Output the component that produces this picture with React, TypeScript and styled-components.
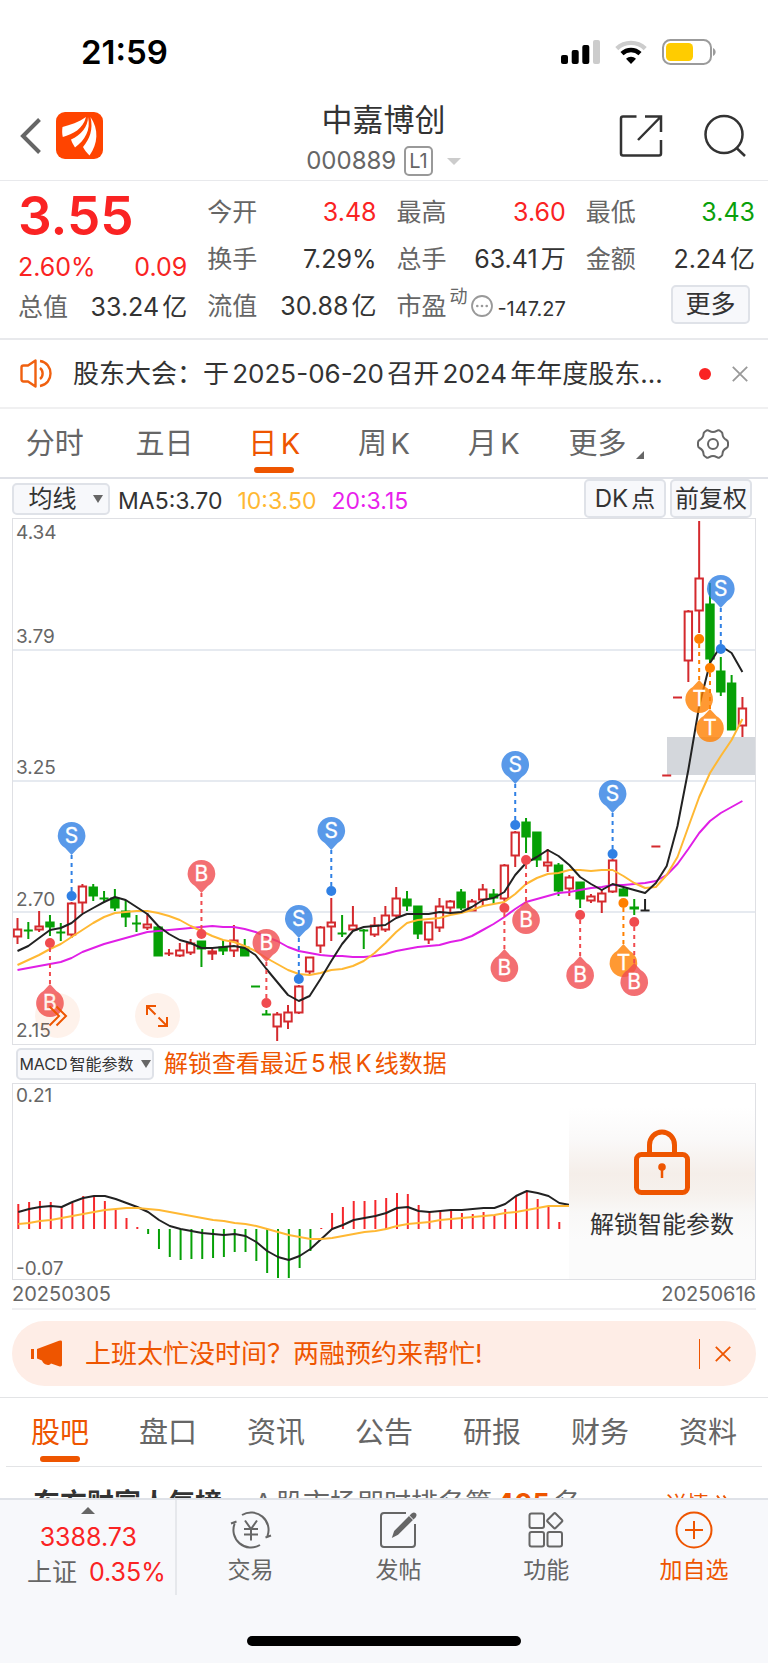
import React from "react";
import styled, { createGlobalStyle } from "styled-components";

const color = {
  text: "#333",
  sub: "#666",
  mute: "#999",
  up: "#fa2323",
  down: "#0aa00a",
  brand: "#ee5500",
  line: "#e8e9ec",
  chip: "#f7f8fb",
  chipLine: "#dfe2e8",
};

const GlobalStyle = createGlobalStyle`
  * { box-sizing: border-box; }
  html, body { margin: 0; background: #fff; }
  body, button {
    font-family: Inter, "Noto Sans CJK SC", sans-serif;
    color: ${color.text};
    text-autospace: normal;
  }
  button { margin: 0; padding: 0; border: 0; background: none; cursor: pointer; }
  svg { display: block; flex: none; }
`;

const Page = styled.div`
  display: flex;
  flex-direction: column;
  height: 100vh;
  overflow: hidden;
  background: #fff;
`;

const Main = styled.main`
  flex: 1;
  min-height: 0;
  overflow: hidden;
`;

/* ---------- status bar and header ---------- */

const StatusBar = styled.div`
  display: flex;
  align-items: center;
  justify-content: space-between;
  height: 88px;
  padding: 15px 52px 0 81px;
  font-size: 33px;
  line-height: 40px;
  font-weight: 600;
  color: #000;
`;

const StatusIcons = styled.div`
  display: flex;
  align-items: center;
  gap: 15px;
`;

const Header = styled.header`
  display: grid;
  grid-template-columns: 1fr auto 1fr;
  align-items: center;
  height: 93px;
  padding: 2px 21px 0 20px;
  border-bottom: 1px solid ${color.line};
`;

const HeaderSide = styled.div<{ $end?: boolean }>`
  display: flex;
  align-items: center;
  justify-content: ${(p) => (p.$end ? "flex-end" : "flex-start")};
  gap: ${(p) => (p.$end ? 41 : 14)}px;
`;

const TitleBlock = styled.div`
  display: flex;
  flex-direction: column;
  align-items: center;
  padding-top: 9px;
`;

const Title = styled.h1`
  margin: 0;
  font-size: 31px;
  line-height: 42px;
  font-weight: 400;
`;

const CodeRow = styled.button`
  display: flex;
  align-items: center;
  gap: 8px;
  height: 40px;
  font-size: 24px;
  line-height: 32px;
  color: ${color.sub};
`;

const LevelTag = styled.span`
  padding: 0 3px;
  border: 2px solid ${color.mute};
  border-radius: 5px;
  font-size: 20px;
  line-height: 26px;
`;

const CodeCaret = styled.span`
  margin-left: 6px;
  border: 7px solid transparent;
  border-top-color: #ccc;
  border-bottom: 0;
`;

/* ---------- quote ---------- */

const Quote = styled.section`
  display: grid;
  grid-template-columns: repeat(4, 1fr);
  column-gap: 20px;
  height: 159px;
  padding: 7px 13px 0 18px;
  border-bottom: 2px solid ${color.line};
`;

const QuoteColumn = styled.div`
  min-width: 0;
`;

const Price = styled.div`
  height: 55px;
  font-size: 53px;
  line-height: 56px;
  font-weight: 600;
  color: ${color.up};
`;

const Change = styled.div`
  display: flex;
  justify-content: space-between;
  height: 40px;
  padding-top: 4px;
  font-size: 25px;
  line-height: 40px;
  color: ${color.up};
`;

const QuoteItem = styled.div`
  display: flex;
  align-items: center;
  justify-content: space-between;
  height: 47px;
  font-size: 25px;
  line-height: 36px;
  white-space: nowrap;
`;

const Label = styled.span`
  color: ${color.sub};
`;

const Value = styled.span<{ $tone?: "up" | "down" }>`
  color: ${(p) => (p.$tone ? color[p.$tone] : color.text)};
`;

const RatioLabel = styled(Label)`
  display: flex;
  align-items: center;
  gap: 3px;
`;

const Super = styled.sup`
  align-self: flex-start;
  font-size: 18px;
  line-height: 18px;
`;

const SmallValue = styled.span`
  padding-top: 6px;
  font-size: 20px;
`;

const ChipButton = styled.button<{ $size?: number }>`
  display: flex;
  align-items: center;
  justify-content: center;
  gap: 8px;
  border: 2px solid ${color.chipLine};
  border-radius: 5px;
  background: ${color.chip};
  font-size: ${(p) => p.$size ?? 24}px;
  line-height: 1;
  white-space: nowrap;
`;

const MoreButton = styled(ChipButton)`
  width: 79px;
  height: 39px;
  margin: 3px 5px 0 auto;
`;

/* ---------- notice ---------- */

const Notice = styled.section`
  display: flex;
  align-items: center;
  height: 69px;
  padding: 0 20px;
  border-bottom: 2px solid #f0f0f1;
  font-size: 26px;
  line-height: 40px;
`;

const NoticeText = styled.a`
  flex: 1;
  min-width: 0;
  margin: 0 16px 0 20px;
  overflow: hidden;
  color: ${color.text};
  text-decoration: none;
  text-overflow: ellipsis;
  white-space: nowrap;
`;

const UnreadDot = styled.span`
  width: 12px;
  height: 12px;
  margin-right: 21px;
  border-radius: 50%;
  background: ${color.up};
`;

/* ---------- tabs ---------- */

const Tabs = styled.nav<{ $inset?: boolean }>`
  display: flex;
  height: ${(p) => (p.$inset ? 69 : 70)}px;
  margin: 0 ${(p) => (p.$inset ? 6 : 0)}px;
  border-bottom: ${(p) => (p.$inset ? "1px solid #e3e4e6" : "2px solid #dfe1e7")};
`;

const Tab = styled.button<{ $active?: boolean }>`
  position: relative;
  display: flex;
  flex: 1;
  align-items: center;
  justify-content: center;
  padding-top: 2px;
  font-size: 29px;
  line-height: 40px;
  color: ${(p) => (p.$active ? color.brand : color.sub)};
  &::after {
    content: "";
    position: absolute;
    left: 50%;
    bottom: 4px;
    width: 40px;
    height: 6px;
    margin-left: -20px;
    border-radius: 3px;
    background: ${(p) => (p.$active ? color.brand : "transparent")};
  }
`;

const Corner = styled.span`
  align-self: flex-end;
  margin: 0 -6px 18px 10px;
  border: 4px solid transparent;
  border-right-color: ${color.sub};
  border-bottom-color: ${color.sub};
`;

/* ---------- charts ---------- */

const ChartSection = styled.section`
  margin: 0 12px;
  border-bottom: 2px solid #efeff1;
`;

const Toolbar = styled.div`
  display: flex;
  align-items: center;
  height: 39px;
`;

const AverageButton = styled(ChipButton)`
  width: 98px;
  height: 32px;
  margin-right: 8px;
  padding-left: 9px;
  gap: 16px;
`;

const Caret = styled.span`
  border: 5px solid transparent;
  border-top: 8px solid ${color.sub};
  border-bottom: 0;
`;

const Legend = styled.span<{ $color: string }>`
  margin-right: 15px;
  padding-top: 5px;
  font-size: 23px;
  line-height: 30px;
  color: ${(p) => p.$color};
`;

const ToolGroup = styled.div`
  display: flex;
  gap: 4px;
  height: 39px;
  margin: 0 4px 0 auto;
`;

const ToolButton = styled(ChipButton)`
  width: 82px;
`;

const KBox = styled.div`
  position: relative;
  border: 1px solid #dfe0e4;
`;

const RoundButton = styled.button<{ $left: string }>`
  position: absolute;
  left: ${(p) => p.$left};
  bottom: 6px;
  display: flex;
  align-items: center;
  justify-content: center;
  width: 45px;
  height: 45px;
  border-radius: 50%;
  background: rgba(238, 85, 0, 0.08);
`;

const MacdBar = styled.div`
  display: flex;
  align-items: center;
  gap: 10px;
  height: 38px;
  padding-left: 4px;
`;

const MacdButton = styled(ChipButton)`
  width: 138px;
  height: 32px;
  gap: 7px;
`;

const UnlockLink = styled.a`
  font-size: 24px;
  line-height: 36px;
  color: ${color.brand};
  text-decoration: none;
`;

const MacdBox = styled.div`
  display: grid;
  grid-template-columns: 556fr 186fr;
  border: 1px solid #dfe0e4;
`;

const UnlockPanel = styled.button`
  display: flex;
  flex-direction: column;
  align-items: center;
  justify-content: center;
  gap: 12px;
  padding-top: 8px;
  font-size: 24px;
  line-height: 36px;
  background: linear-gradient(#fff 12%, #faf9f9 28%, #f5eee9 46%, #f6f1ed 56%, #f9f8f7 66%, #fbfbfb 80%);
`;

const Dates = styled.div`
  display: flex;
  justify-content: space-between;
  height: 28px;
  font-size: 20px;
  line-height: 28px;
  color: ${color.sub};
`;

/* ---------- promo, feed ---------- */

const Promo = styled.aside`
  display: flex;
  align-items: center;
  height: 65px;
  margin: 11px 12px;
  padding: 0 25px 0 19px;
  border-radius: 33px;
  background: #feede6;
  color: ${color.brand};
`;

const PromoText = styled.a`
  flex: 1;
  margin-left: 22px;
  font-size: 26px;
  line-height: 40px;
  color: ${color.brand};
  text-decoration: none;
`;

const PromoClose = styled.button`
  display: flex;
  align-items: center;
  height: 30px;
  padding-left: 15px;
  border-left: 1px solid ${color.brand};
`;

const Rule = styled.hr`
  height: 1px;
  margin: 0;
  border: 0;
  background: #e3e4e6;
`;

const Rank = styled.div`
  display: flex;
  align-items: center;
  padding: 17px 37px 17px 33px;
  font-size: 27px;
  line-height: 40px;
  color: ${color.sub};
`;

const RankTitle = styled.strong`
  margin-right: 32px;
  color: ${color.text};
`;

const RankValue = styled.strong`
  margin: 0 4px;
  color: ${color.brand};
`;

const RankLink = styled.a`
  display: flex;
  align-items: center;
  gap: 7px;
  margin-left: auto;
  font-size: 22px;
  color: ${color.brand};
  text-decoration: none;
`;

/* ---------- bottom bar ---------- */

const Footer = styled.footer`
  border-top: 2px solid ${color.chipLine};
  background: ${color.chip};
`;

const FooterRow = styled.div`
  display: flex;
  height: 95px;
`;

const IndexBox = styled.button`
  display: flex;
  flex: 0 0 23%;
  flex-direction: column;
  align-items: center;
  padding: 7px 0 0 2px;
  border-right: 2px solid #e6e8ec;
  font-size: 25px;
  line-height: 35px;
  color: ${color.sub};
  em { font-style: normal; color: ${color.up}; }
`;

const IndexCaret = styled.span`
  margin-bottom: 6px;
  border: 7px solid transparent;
  border-bottom-color: ${color.sub};
  border-top: 0;
`;

const IndexLine = styled.span`
  display: flex;
  gap: 12px;
  padding-left: 16px;
`;

const Action = styled.button<{ $active?: boolean }>`
  display: flex;
  flex: 1;
  flex-direction: column;
  align-items: center;
  gap: 4px;
  padding-top: 11px;
  font-size: 23px;
  line-height: 34px;
  color: ${(p) => (p.$active ? color.brand : color.sub)};
`;

const HomeIndicator = styled.div`
  width: 274px;
  height: 10px;
  margin: 41px auto 17px;
  border-radius: 5px;
  background: #000;
`;

/* ---------- chart data ---------- */

// [tone, high, body top, body bottom, low]
type Candle = ["r" | "g" | "k", number, number, number, number];

const candles: Candle[] = [
  ["r", 918, 929, 937, 944], ["g", 922, 930, 931, 939], ["r", 911, 926, 930, 932], ["g", 915, 922, 927, 936],
  ["g", 923, 932, 933, 941], ["r", 902, 903, 935, 938], ["r", 884, 886, 903, 913], ["g", 884, 887, 896, 901],
  ["g", 891, 898, 899, 903], ["g", 889, 898, 908, 911], ["g", 900, 911, 917, 927], ["g", 915, 923, 924, 932],
  ["r", 913, 924, 928, 930], ["g", 926, 927, 956, 956], ["r", 949, 953, 954, 956], ["r", 943, 950, 956, 957],
  ["r", 939, 943, 953, 955], ["g", 941, 941, 949, 967], ["r", 949, 951, 954, 960], ["g", 940, 947, 951, 955],
  ["r", 925, 940, 951, 957], ["g", 939, 947, 956, 956], ["g", 986, 986, 987, 987], ["g", 1010, 1014, 1015, 1015],
  ["r", 1012, 1014, 1027, 1041], ["r", 1005, 1012, 1022, 1029], ["r", 985, 986, 1013, 1014], ["r", 957, 957, 972, 974],
  ["r", 926, 927, 946, 953], ["r", 898, 922, 927, 941], ["g", 915, 933, 934, 937], ["r", 906, 925, 930, 931],
  ["g", 929, 930, 931, 949], ["r", 917, 925, 935, 937], ["r", 906, 915, 930, 932], ["r", 887, 898, 916, 917],
  ["g", 891, 899, 906, 911], ["g", 906, 906, 934, 939], ["r", 922, 922, 940, 944], ["r", 898, 906, 928, 932],
  ["r", 900, 901, 908, 913], ["g", 889, 892, 908, 910], ["r", 899, 901, 911, 911], ["r", 884, 889, 900, 906],
  ["g", 889, 894, 898, 904], ["r", 864, 865, 899, 901], ["r", 831, 832, 856, 867], ["g", 818, 822, 837, 853],
  ["g", 832, 832, 860, 867], ["r", 849, 862, 866, 872], ["g", 863, 865, 891, 896], ["r", 875, 877, 889, 896],
  ["g", 882, 882, 899, 908], ["r", 894, 896, 901, 903], ["r", 889, 893, 902, 913], ["r", 859, 860, 892, 893],
  ["g", 888, 889, 896, 896], ["g", 899, 907, 909, 915], ["k", 899, 910, 911, 911], ["r", 846, 846, 847, 847],
  ["r", 775, 775, 776, 776], ["r", 697, 697, 698, 698], ["r", 610, 611, 661, 682], ["r", 521, 578, 611, 633],
  ["g", 583, 604, 659, 663], ["g", 657, 671, 692, 696], ["g", 675, 683, 730, 730], ["r", 697, 708, 726, 737],
];

const ma5 = [
  951, 946, 938, 930, 928, 923, 914, 908, 902, 897, 900, 907, 914, 926, 934, 940, 943, 948, 948, 947, 946, 948, 955, 969,
  982, 995, 1001, 996, 979, 961, 944, 931, 927, 926, 925, 918, 914, 914, 914, 912, 913, 912, 907, 900, 898, 892, 875, 863,
  857, 850, 856, 865, 877, 884, 890, 884, 887, 890, 893, 883, 866, 826, 770, 706, 663, 646, 653, 672,
];

const ma10 = [
  965, 960, 955, 949, 944, 937, 930, 923, 917, 913, 912, 911, 911, 913, 916, 920, 926, 931, 936, 940, 942, 946, 951, 958,
  964, 970, 974, 975, 973, 970, 969, 966, 961, 953, 943, 932, 923, 920, 919, 918, 915, 913, 910, 906, 904, 902, 894, 884,
  878, 874, 873, 870, 870, 871, 870, 870, 876, 883, 888, 887, 875, 857, 827, 797, 773, 756, 740, 719,
];

const ma20 = [
  970, 968, 966, 964, 962, 958, 952, 948, 944, 941, 938, 935, 932, 931, 930, 929, 928, 927, 926, 927, 927, 929, 932, 937,
  941, 947, 951, 953, 955, 956, 956, 957, 957, 956, 954, 951, 949, 947, 946, 945, 942, 940, 936, 930, 924, 917, 909, 902,
  899, 896, 893, 892, 890, 888, 887, 885, 885, 884, 883, 881, 875, 864, 849, 833, 821, 813, 807, 801,
];

type PinKind = "S" | "B" | "T";
// [candle index, letter, dot y, above the dot]
const pins: [number, PinKind, number, boolean][] = [
  [3, "B", 943, false], [5, "S", 896, true], [17, "B", 934, true], [23, "B", 1003, true], [26, "S", 979, true],
  [29, "S", 891, true], [45, "B", 908, false], [46, "S", 825, true], [47, "B", 860, false], [52, "B", 915, false],
  [55, "S", 854, true], [56, "T", 903, false], [57, "B", 922, false], [63, "T", 639, false], [64, "T", 668, false],
  [65, "S", 649, true],
];

const pinColors: Record<PinKind, string> = {
  S: "#3080e4",
  B: "#f04b4f",
  T: "#ff8000",
};

const macdBars = [
  1204, 1202, 1201, 1202, 1207, 1203, 1196, 1197, 1201, 1210, 1218, 1227, 1234, 1249, 1257, 1260, 1259, 1259, 1258, 1257,
  1252, 1252, 1261, 1273, 1278, 1278, 1268, 1251, 1228, 1213, 1207, 1201, 1201, 1200, 1198, 1193, 1194, 1205, 1211, 1211,
  1209, 1213, 1214, 1212, 1215, 1209, 1196, 1192, 1199, 1207, 1222,
];

const dif = [
  1212, 1209, 1207, 1206, 1207, 1202, 1198, 1196, 1196, 1199, 1203, 1207, 1212, 1220, 1226, 1229, 1231, 1233, 1234, 1235,
  1234, 1236, 1242, 1251, 1257, 1260, 1256, 1249, 1239, 1229, 1225, 1220, 1218, 1216, 1213, 1208, 1207, 1211, 1212, 1211,
  1210, 1210, 1209, 1208, 1208, 1204, 1196, 1191, 1193, 1196, 1203, 1205,
];

const dea = [
  1224, 1223, 1221, 1220, 1218, 1216, 1214, 1212, 1210, 1209, 1208, 1208, 1209, 1210, 1212, 1214, 1216, 1218, 1220, 1221,
  1223, 1224, 1226, 1229, 1232, 1235, 1237, 1239, 1239, 1238, 1236, 1234, 1232, 1231, 1229, 1226, 1224, 1223, 1222, 1220,
  1219, 1218, 1217, 1216, 1215, 1213, 1212, 1210, 1208, 1206, 1206, 1206,
];

const step = 10.82;
const kx = (i: number) => 17.5 + i * step;
const mx = (i: number) => 18.3 + i * step;
const toPoints = (ys: number[], x: (i: number) => number) => ys.map((y, i) => `${x(i).toFixed(1)},${y}`).join(" ");

const candleColor = { r: "#d42a2e", g: "#06a006", k: "#222" };

function CandleMark({ data, x }: { data: Candle; x: number }) {
  const [tone, high, top, bottom, low] = data;
  const stroke = candleColor[tone];
  const flat = bottom - top <= 1;
  return (
    <g stroke={stroke} strokeWidth={2} fill={tone === "g" ? stroke : "none"}>
      {flat ? (
        <path d={`M${x - 4.5} ${top + 0.5}h9M${x} ${high}V${low}`} />
      ) : (
        <>
          <path d={`M${x} ${high}V${top}M${x} ${bottom}V${low}`} />
          <rect x={x - 3.7} y={top + 0.5} width={7.4} height={Math.max(1, bottom - top - 1)} />
        </>
      )}
    </g>
  );
}

function Pin({ x, kind, dot, above }: { x: number; kind: PinKind; dot: number; above: boolean }) {
  const dir = above ? -1 : 1;
  const cy = dot + dir * 60;
  const tip = cy - dir * 19;
  const base = cy - dir * 12;
  const fill = pinColors[kind];
  return (
    <g>
      <path d={`M${x} ${tip}V${dot}`} stroke={fill} strokeWidth={2} strokeDasharray="4 4" />
      <circle cx={x} cy={dot} r={5} fill={fill} />
      <path
        d={`M${x} ${tip}L${x - 6.5} ${base}A13.8 13.8 0 1 ${above ? 1 : 0} ${x + 6.5} ${base}Z`}
        fill={fill}
        fillOpacity={0.8}
      />
      <text x={x} y={cy + 7} textAnchor="middle" fontSize={21} fill="#fff" stroke="#fff" strokeWidth={0.3}>
        {kind}
      </text>
    </g>
  );
}

function KChart() {
  return (
    <svg viewBox="13 519 742 525" width="100%" role="img" aria-label="日K线图" fontFamily="Inter, sans-serif">
      <g stroke="#e6eaf0" strokeWidth={2}>
        <path d="M13 650H755M13 781H755M13 912H755" />
      </g>
      <rect x={667} y={737} width={88} height={38} fill="#d4d7dc" />
      <g fontSize={19} fill="#666">
        <text x={16} y={539}>4.34</text>
        <text x={16} y={643}>3.79</text>
        <text x={16} y={774}>3.25</text>
        <text x={16} y={906}>2.70</text>
        <text x={16} y={1037}>2.15</text>
      </g>
      {candles.map((c, i) => (
        <CandleMark key={i} data={c} x={kx(i)} />
      ))}
      <g fill="none" strokeWidth={2} strokeLinejoin="round">
        <polyline points={toPoints(ma20, kx)} stroke="#e01fe6" />
        <polyline points={toPoints(ma10, kx)} stroke="#ffb833" />
        <polyline points={toPoints(ma5, kx)} stroke="#222" />
      </g>
      {pins.map(([i, kind, dot, above]) => (
        <Pin key={i} x={kx(i)} kind={kind} dot={dot} above={above} />
      ))}
    </svg>
  );
}

function MacdChart() {
  return (
    <svg viewBox="13 1084 556 195" width="100%" role="img" aria-label="MACD图" fontFamily="Inter, sans-serif">
      <g fontSize={19} fill="#666">
        <text x={16} y={1102}>0.21</text>
        <text x={16} y={1275}>-0.07</text>
      </g>
      {macdBars.map((y, i) => (
        <path key={i} d={`M${mx(i)} 1229V${y}`} stroke={y < 1229 ? "#f5282c" : "#06a006"} strokeWidth={2} />
      ))}
      <g fill="none" strokeWidth={2} strokeLinejoin="round">
        <polyline points={toPoints(dif, mx)} stroke="#222" />
        <polyline points={toPoints(dea, mx)} stroke="#ffb833" />
      </g>
    </svg>
  );
}

/* ---------- icons ---------- */

const CloseIcon = ({ stroke }: { stroke: string }) => (
  <svg width="16" height="16" viewBox="0 0 16 16" stroke={stroke} strokeWidth="1.8" fill="none">
    <path d="M.8.8l14.4 14.4M15.2.8L.8 15.2" />
  </svg>
);

const SignalIcon = () => (
  <svg width="39" height="24" viewBox="0 0 39 24">
    <rect x="0" y="15" width="7" height="9" rx="2" />
    <rect x="10.7" y="10" width="7" height="14" rx="2" />
    <rect x="21.3" y="5" width="7" height="19" rx="2" />
    <rect x="32" y="0" width="7" height="24" rx="2" fill="#ccc" />
  </svg>
);

const WifiIcon = () => (
  <svg width="32" height="24" viewBox="0 0 32 24" fill="none" strokeWidth="4.4">
    <path d="M1.8 8.6a20.5 20.5 0 0 1 28.4 0" stroke="#ccc" />
    <path d="M7 13.6a13 13 0 0 1 18 0" stroke="#000" />
    <path d="M16 24l-5-5.2a7.2 7.2 0 0 1 10 0z" fill="#000" />
  </svg>
);

const BatteryIcon = () => (
  <svg width="54" height="26" viewBox="0 0 54 26">
    <rect x="1" y="1" width="48" height="24" rx="7.5" fill="none" stroke="#9b9b9b" strokeWidth="2" />
    <rect x="4" y="4" width="27" height="18" rx="4.5" fill="#ffcc00" />
    <path d="M51 9c3.5 1.5 3.5 6.5 0 8z" fill="#9b9b9b" />
  </svg>
);

const BackIcon = () => (
  <svg width="22" height="38" viewBox="0 0 22 38" fill="none" stroke="#666" strokeWidth="4">
    <path d="M19.5 2.5L3 19l16.5 16.5" />
  </svg>
);

const LogoIcon = () => (
  <svg width="47" height="47" viewBox="0 0 47 47">
    <rect width="47" height="47" rx="9" fill="#ff4400" />
    <g fill="#fff">
      <path d="M30 5C23 10 14 13 6.5 15c-.5 3-.5 7 .3 10C17 22 27 17 30 5z" />
      <path d="M32 5c0 10-7 18-17 22.500 1 3 2.500 5.500 4 8C29 28 35 18 32 5z" />
      <path d="M34.500 5c3 13-1 22-7.500 30 1.500 3 4 6 6.500 8.500C42 32 43 17 34.500 5z" />
    </g>
  </svg>
);

const ShareIcon = () => (
  <svg width="44" height="42" viewBox="0 0 44 42" fill="none" stroke="#333" strokeWidth="2.5">
    <path d="M17.500 1.500H4Q2 1.500 2 3.500v35q0 2 2 2h36q2 0 2-2V25" />
    <path d="M26 1.500h16V17M41.500 2L19 25" />
  </svg>
);

const SearchIcon = () => (
  <svg width="43" height="43" viewBox="0 0 43 43" fill="none" stroke="#333" strokeWidth="2.5">
    <circle cx="20" cy="20.5" r="18.5" />
    <path d="M32 33.500l9 8.500" />
  </svg>
);

const SpeakerIcon = () => (
  <svg width="33" height="29" viewBox="0 0 33 29" fill="none" stroke="#f0600f" strokeWidth="2.4" strokeLinejoin="round">
    <path d="M1.500 8.500q0-2 2-2H8L15.500 1.500v26L8 22.500H3.500q-2 0-2-2z" />
    <path d="M20 9c3.500 2.500 3.500 8.500 0 11M20 2c14 2 14 23 0 25" />
  </svg>
);

const DotsIcon = () => (
  <svg width="22" height="22" viewBox="0 0 22 22" fill="#999">
    <circle cx="11" cy="11" r="10" fill="none" stroke="#999" strokeWidth="1.8" />
    <circle cx="6.3" cy="11" r="1.3" />
    <circle cx="11" cy="11" r="1.3" />
    <circle cx="15.7" cy="11" r="1.3" />
  </svg>
);

const GearIcon = () => (
  <svg width="32" height="30" viewBox="0 0 32 30" fill="none" stroke="#666" strokeWidth="2" strokeLinejoin="round">
    <path d="M9.500 1.500q1.500-.8 2.800.4 3.700 2.400 7.400 0 1.300-1.200 2.800-.4l2 1.500q1 .8 1 2.300.2 3.700 4 5.700 1.500.8 1.500 2.500v3q0 1.700-1.500 2.500-3.800 2-4 5.700 0 1.500-1 2.300l-2 1.500q-1.500.8-2.800-.4-3.700-2.400-7.400 0-1.300 1.200-2.800.4l-2-1.500q-1-.8-1-2.300-.2-3.700-4-5.700Q1 18.200 1 16.500v-3q0-1.700 1.500-2.500 3.800-2 4-5.700 0-1.500 1-2.300z" />
    <circle cx="16" cy="15" r="5" />
  </svg>
);

const MegaphoneIcon = () => (
  <svg width="32" height="27" viewBox="0 0 32 27" fill="#ee5500">
    <path d="M0 9h3v10H0zM6 9L28 .8q3-.8 3 1V25q0 2-3 1.200l-8-2.700q-1 2-4 1.200-4-.7-5-4.200l-5-2z" />
  </svg>
);

const LockIcon = () => (
  <svg width="56" height="66" viewBox="0 0 56 66" fill="none" stroke="#ee5500" strokeWidth="5">
    <rect x="2.500" y="25.500" width="51" height="38" rx="5" />
    <path d="M15.500 25V16a12.500 13 0 0 1 25 0v9" />
    <circle cx="28" cy="38" r="3.8" fill="#ee5500" stroke="none" />
    <path d="M28 38v11" strokeWidth="2.5" />
  </svg>
);

const TradeIcon = () => (
  <svg width="42" height="38" viewBox="0 0 42 38" fill="none" stroke="#666" strokeWidth="2">
    <path d="M12 4A17.5 17.5 0 0 1 37.300 25.500M35.500 26.500l5.500-2" />
    <path d="M30 34A17.5 17.5 0 0 1 4.700 12.500M6.500 10.500L1 12.500" />
    <path d="M15 9.500l6 8.500 6-8.500M21 18v11.500M14 18h14M14 23.500h14" />
  </svg>
);

const PostIcon = () => (
  <svg width="38" height="38" viewBox="0 0 38 38" fill="none" stroke="#666" strokeWidth="2">
    <path d="M27 2H5Q2 2 2 5v28q0 3 3 3h28q3 0 3-3V13" />
    <path d="M14.500 25l1.500-4.500L30 6.500l2.500 2.500-14 14z" fill="#666" />
    <path d="M32 4.500l1.500-1.500q1.500-1 2.500 0t0 2.500L34.500 7z" fill="#666" />
  </svg>
);

const GridIcon = () => (
  <svg width="36" height="38" viewBox="0 0 36 38" fill="none" stroke="#666" strokeWidth="2">
    <rect x="1.500" y="2.500" width="14.500" height="14.500" rx="2" />
    <rect x="1.500" y="21" width="14.500" height="14.500" rx="2" />
    <rect x="19.500" y="21" width="14.500" height="14.500" rx="2" />
    <rect x="21" y="4" width="11.500" height="11.500" rx="1.500" transform="rotate(45 26.750 9.750)" />
  </svg>
);

const PlusIcon = () => (
  <svg width="38" height="38" viewBox="0 0 38 38" fill="none" stroke="#ee5500" strokeWidth="2">
    <circle cx="19" cy="19" r="17.500" />
    <path d="M19 10v18M10 19h18" />
  </svg>
);

const DoubleChevron = () => (
  <svg width="15" height="20" viewBox="0 0 15 20" fill="none" stroke="#ee5500" strokeWidth="2">
    <path d="M1 1.500l6 8.500-6 8.500M7.500 1.500l6 8.500-6 8.500" />
  </svg>
);

const periods = ["分时", "五日", "日K", "周K", "月K"];
const sections = ["股吧", "盘口", "资讯", "公告", "研报", "财务", "资料"];

const quoteColumns: { label: string; value: string; tone?: "up" | "down" }[][] = [
  [
    { label: "今开", value: "3.48", tone: "up" },
    { label: "换手", value: "7.29%" },
    { label: "流值", value: "30.88亿" },
  ],
  [
    { label: "最高", value: "3.60", tone: "up" },
    { label: "总手", value: "63.41万" },
  ],
  [
    { label: "最低", value: "3.43", tone: "down" },
    { label: "金额", value: "2.24亿" },
  ],
];

function QuoteRows({ items }: { items: (typeof quoteColumns)[number] }) {
  return (
    <>
      {items.map((item) => (
        <QuoteItem key={item.label}>
          <Label>{item.label}</Label>
          <Value $tone={item.tone}>{item.value}</Value>
        </QuoteItem>
      ))}
    </>
  );
}

export default function App() {
  return (
    <Page>
      <GlobalStyle />
      <StatusBar>
        <span>21:59</span>
        <StatusIcons>
          <SignalIcon />
          <WifiIcon />
          <BatteryIcon />
        </StatusIcons>
      </StatusBar>
      <Header>
        <HeaderSide>
          <button aria-label="返回"><BackIcon /></button>
          <LogoIcon />
        </HeaderSide>
        <TitleBlock>
          <Title>中嘉博创</Title>
          <CodeRow>
            000889
            <LevelTag>L1</LevelTag>
            <CodeCaret />
          </CodeRow>
        </TitleBlock>
        <HeaderSide $end>
          <button aria-label="分享"><ShareIcon /></button>
          <button aria-label="搜索"><SearchIcon /></button>
        </HeaderSide>
      </Header>
      <Main>
        <Quote>
          <QuoteColumn>
            <Price>3.55</Price>
            <Change>
              <span>2.60%</span>
              <span>0.09</span>
            </Change>
            <QuoteItem>
              <Label>总值</Label>
              <Value>33.24亿</Value>
            </QuoteItem>
          </QuoteColumn>
          <QuoteColumn>
            <QuoteRows items={quoteColumns[0]} />
          </QuoteColumn>
          <QuoteColumn>
            <QuoteRows items={quoteColumns[1]} />
            <QuoteItem>
              <RatioLabel>
                市盈<Super>动</Super>
                <DotsIcon />
              </RatioLabel>
              <SmallValue>-147.27</SmallValue>
            </QuoteItem>
          </QuoteColumn>
          <QuoteColumn>
            <QuoteRows items={quoteColumns[2]} />
            <MoreButton $size={25}>更多</MoreButton>
          </QuoteColumn>
        </Quote>
        <Notice>
          <SpeakerIcon />
          <NoticeText href="#notice">股东大会：于2025-06-20召开2024年年度股东...</NoticeText>
          <UnreadDot />
          <button aria-label="关闭公告"><CloseIcon stroke="#999" /></button>
        </Notice>
        <Tabs>
          {periods.map((name) => (
            <Tab key={name} $active={name === "日K"}>{name}</Tab>
          ))}
          <Tab>更多<Corner /></Tab>
          <Tab aria-label="设置"><GearIcon /></Tab>
        </Tabs>
        <ChartSection>
          <Toolbar>
            <AverageButton>均线<Caret /></AverageButton>
            <Legend $color={color.text}>MA5:3.70</Legend>
            <Legend $color="#ffb833">10:3.50</Legend>
            <Legend $color="#e81fec">20:3.15</Legend>
            <ToolGroup>
              <ToolButton>DK点</ToolButton>
              <ToolButton>前复权</ToolButton>
            </ToolGroup>
          </Toolbar>
          <KBox>
            <KChart />
            <RoundButton $left="3%" aria-label="快进">
              <svg width="20" height="22" viewBox="0 0 20 22" fill="none" stroke="#ee5500" strokeWidth="2">
                <path d="M1.500 1.500L11 11l-9.500 9.500M8.500 1.500L18 11l-9.500 9.500" />
              </svg>
            </RoundButton>
            <RoundButton $left="16.4%" aria-label="全屏">
              <svg width="24" height="24" viewBox="0 0 24 24" fill="none" stroke="#ee5500" strokeWidth="2">
                <path d="M2 11V2h9M2 2l8.500 8.500M22 13v9h-9M22 22l-8.500-8.500" />
              </svg>
            </RoundButton>
          </KBox>
          <MacdBar>
            <MacdButton $size={16}>MACD智能参数<Caret /></MacdButton>
            <UnlockLink href="#unlock">解锁查看最近5根K线数据</UnlockLink>
          </MacdBar>
          <MacdBox>
            <MacdChart />
            <UnlockPanel>
              <LockIcon />
              解锁智能参数
            </UnlockPanel>
          </MacdBox>
          <Dates>
            <span>20250305</span>
            <span>20250616</span>
          </Dates>
        </ChartSection>
        <Promo>
          <MegaphoneIcon />
          <PromoText href="#promo">上班太忙没时间？两融预约来帮忙!</PromoText>
          <PromoClose aria-label="关闭"><CloseIcon stroke={color.brand} /></PromoClose>
        </Promo>
        <Rule />
        <Tabs $inset>
          {sections.map((name) => (
            <Tab key={name} $active={name === "股吧"}>{name}</Tab>
          ))}
        </Tabs>
        <Rank>
          <RankTitle>东方财富人气榜</RankTitle>
          A股市场即时排名第<RankValue>405</RankValue>名
          <RankLink href="#rank">详情<DoubleChevron /></RankLink>
        </Rank>
      </Main>
      <Footer>
        <FooterRow>
          <IndexBox>
            <IndexCaret />
            <em>3388.73</em>
            <IndexLine>上证<em>0.35%</em></IndexLine>
          </IndexBox>
          <Action><TradeIcon />交易</Action>
          <Action><PostIcon />发帖</Action>
          <Action><GridIcon />功能</Action>
          <Action $active><PlusIcon />加自选</Action>
        </FooterRow>
        <HomeIndicator />
      </Footer>
    </Page>
  );
}
